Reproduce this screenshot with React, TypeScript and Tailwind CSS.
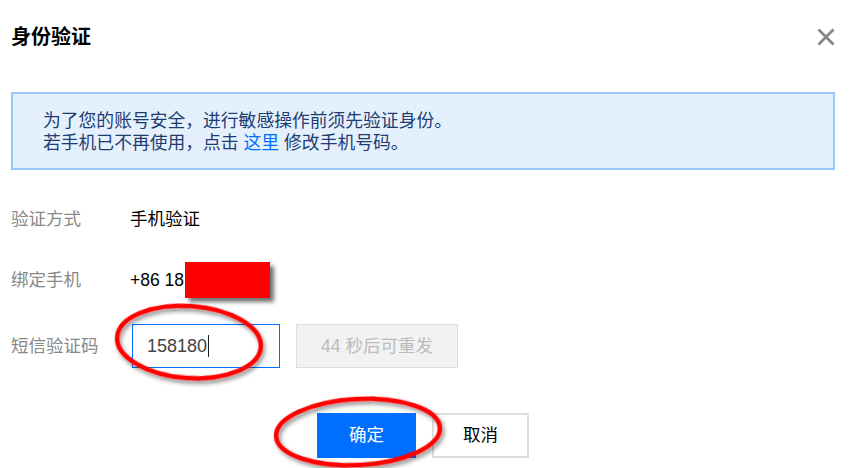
import React from 'react'

const font = { fontFamily: '"Liberation Sans", "Noto Sans CJK SC", sans-serif' }

export default function App() {
  return (
    <div className="relative w-[865px] h-[468px] overflow-hidden bg-white" style={font}>
      {/* Header */}
      <div className="flex justify-between items-start pl-[11px] pr-[30px] pt-[27px] h-[64px]">
        <h2 className="text-[20px] leading-[20px] font-bold text-black">身份验证</h2>
        <button className="w-[18px] h-[18px] mt-[1px] text-[#858585]">
          <svg viewBox="0 0 18 18" className="w-[18px] h-[18px]">
            <path d="M1.5 1.5 L16.5 16.5 M16.5 1.5 L1.5 16.5" stroke="currentColor" strokeWidth="2.8" fill="none" />
          </svg>
        </button>
      </div>

      <div className="pl-[11px] pr-[30px]">
        {/* Tip */}
        <div className="mt-[28px] h-[78px] border-2 border-[#9ac8fb] bg-[#e5f0fd] pl-[30px] pt-[16px] text-[17.8px] leading-[22px] text-[#1d3d72]">
          <p>为了您的账号安全，进行敏感操作前须先验证身份。</p>
          <p>
            若手机已不再使用，点击 <a className="text-[#006eff] cursor-pointer">这里</a> 修改手机号码。
          </p>
        </div>

        {/* Rows */}
        <div className="mt-[29px] flex items-center h-[40px] text-[17.5px]">
          <span className="w-[119px] text-[#888]">验证方式</span>
          <span className="text-black">手机验证</span>
        </div>
        <div className="mt-[21px] flex items-center h-[40px] text-[17.5px]">
          <span className="w-[119px] text-[#888]">绑定手机</span>
          <span className="text-black">+86 18</span>
        </div>
        <div className="mt-[24px] flex items-center h-[44px] text-[17.5px]">
          <span className="w-[121px] text-[#888]">短信验证码</span>
          <div className="w-[148px] h-[44px] border-[1.5px] border-[#006eff] flex items-center pl-[14px] text-[18px] text-[#444]">
            158180<span className="w-px h-[22px] bg-[#222] ml-[1px]" />
          </div>
          <button className="ml-[16px] w-[162px] h-[44px] border border-[#ddd] bg-[#f2f2f2] text-[#bbb]">
            44 秒后可重发
          </button>
        </div>

        {/* Actions */}
        <div className="mt-[45px] flex justify-center gap-[16px] text-[17.5px]">
          <button className="w-[99px] h-[45px] bg-[#006eff] text-white">确定</button>
          <button className="w-[97px] h-[45px] border-2 border-[#ddd] bg-white text-black">取消</button>
        </div>
      </div>

      {/* Annotations */}
      <div className="absolute left-[185px] top-[262px] w-[85px] h-[36px] bg-[#ff0000] shadow-[4px_4px_4px_rgba(0,0,0,0.55)]" />
      <svg className="absolute inset-0 pointer-events-none" width="865" height="468">
        <defs>
          <filter id="sh" x="-20%" y="-20%" width="140%" height="140%">
            <feDropShadow dx="2" dy="3" stdDeviation="2" floodColor="#000" floodOpacity="0.45" />
          </filter>
        </defs>
        <ellipse cx="189" cy="342" rx="72" ry="36" transform="rotate(4 189 342)" fill="none" stroke="#ff0000" strokeWidth="4.5" filter="url(#sh)" />
        <ellipse cx="358" cy="432" rx="82" ry="33" transform="rotate(-3 358 432)" fill="none" stroke="#ff0000" strokeWidth="4.5" filter="url(#sh)" />
      </svg>
    </div>
  )
}
